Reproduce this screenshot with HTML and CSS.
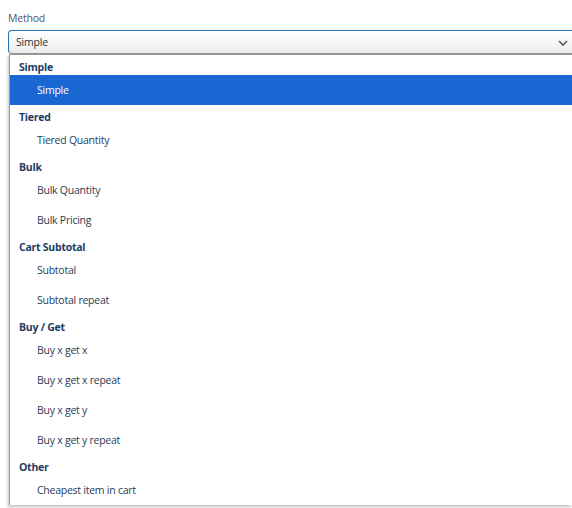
FILE: index.html
```html
<!DOCTYPE html>
<html lang="en">
<head>
  <meta charset="UTF-8" />
  <title>Method</title>
  <link rel="stylesheet" href="styles.css">
</head>
<body>
  <div class="field">
    <label class="field-label">Method</label>
    <div class="select">
      <span>Simple</span>
      <svg class="chevron" width="10" height="6" viewBox="0 0 10 6"><path d="M1 1l4 4 4-4" fill="none" stroke="#50575e" stroke-width="1.6"/></svg>
    </div>
    <div class="menu">
      <div class="group">Simple</div>
      <div class="option selected">Simple</div>
      <div class="group">Tiered</div>
      <div class="option">Tiered Quantity</div>
      <div class="group">Bulk</div>
      <div class="option">Bulk Quantity</div>
      <div class="option">Bulk Pricing</div>
      <div class="group">Cart Subtotal</div>
      <div class="option">Subtotal</div>
      <div class="option">Subtotal repeat</div>
      <div class="group">Buy / Get</div>
      <div class="option">Buy x get x</div>
      <div class="option">Buy x get x repeat</div>
      <div class="option">Buy x get y</div>
      <div class="option">Buy x get y repeat</div>
      <div class="group">Other</div>
      <div class="option">Cheapest item in cart</div>
    </div>
  </div>
</body>
</html>
```

FILE: styles.css
```css
* { box-sizing: border-box; margin: 0; padding: 0; }
html, body { overflow: hidden; }
body { font-family: "Open Sans", "Liberation Sans", sans-serif; background: #fff; padding: 8px 0 0 8px; width: 572px; height: 508px; }
.field { width: 564px; }
.field-label { display: block; font-size: 10.5px; letter-spacing: -0.2px; line-height: 20px; color: #50575e; margin-bottom: 2px; }
.select {
  display: flex; align-items: center; justify-content: space-between; width: 564px; height: 24px;
  padding: 0 4px 0 7px; font-size: 10.5px; letter-spacing: -0.2px; color: #2c3338;
  border: 1px solid #2271b1; border-bottom-color: #8c8f94; border-right: none; border-radius: 4px 0 0 4px;
  background: linear-gradient(#fff, #ececec);
}
.chevron { margin-top: 1px; }
.menu {
  margin-left: 1px; width: 563px; background: #fff;
  border: 1px solid #9a9a9a; border-bottom: none; border-right: none;
  box-shadow: -1px 2px 3px rgba(0,0,0,0.25);
}
.group { height: 20px; padding: 4px 0 0 9px; font-size: 10.5px; letter-spacing: -0.25px; line-height: 16px; font-weight: 700; color: #1d3c66; }
.option { height: 30px; padding-left: 27px; font-size: 10.5px; letter-spacing: -0.25px; line-height: 30px; color: #2a3b56; }
.option.selected { background: #1967d2; color: #fff; }
```
